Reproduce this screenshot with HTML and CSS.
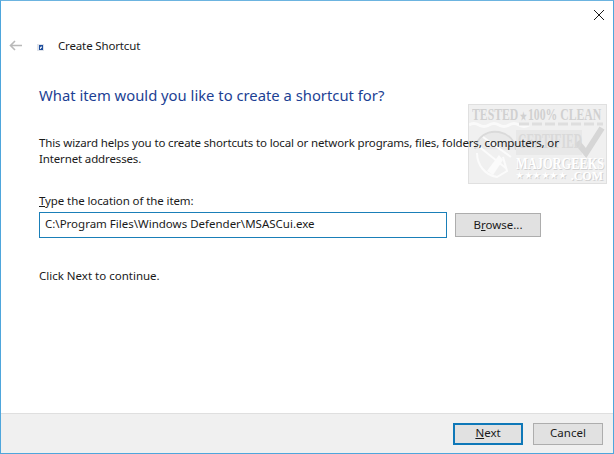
FILE: index.html
```html
<!DOCTYPE html>
<html lang="en">
<head>
<meta charset="utf-8">
<title>Create Shortcut</title>
<link rel="stylesheet" href="styles.css">
</head>
<body>
<div class="window">
  <div class="stamp">
    <svg class="stamp-art" width="137" height="78" viewBox="0 0 137 78">
      <path d="M0 20q5-3 10 0t10 0 10 0 10 0 10 0 10 0" stroke="#fafafa" stroke-width="3" fill="none"/>
      <path d="M50 19h84" stroke="#dedede" stroke-width="3" stroke-dasharray="10 3" fill="none"/>
      <path d="M6 44c2-12 12-19 24-17 10 2 16 9 17 18" stroke="#dadada" stroke-width="2" fill="#e9e9e9"/>
      <path d="M8 40l30 24M14 32l28 20M8 48c0 12 8 22 20 24l10-6-4-14" stroke="#fbfbfb" stroke-width="2" fill="none"/>
      <path d="M18 66l12-16 4 5-10 15z" fill="#fbfbfb"/>
      <rect x="47" y="25" width="66" height="25" fill="#e8e8e8"/>
      <path d="M108 37l9 11 16-25" stroke="#d6d6d6" stroke-width="6" fill="none"/>
    </svg>
    <div class="stamp-top">TESTED<span class="top-star">★</span>100% CLEAN</div>
    <div class="stamp-mid">CERTIFIED</div>
    <div class="stamp-name">MAJORGEEKS</div>
    <div class="stamp-bot"><span class="stars">★★★★★★</span><span>.COM</span></div>
  </div>
  <div class="closebar">
    <svg class="close-icon" width="10" height="10" viewBox="0 0 10 10"><path d="M0 0l10 10M10 0L0 10" stroke="#1a1a1a" stroke-width="1" fill="none"/></svg>
  </div>
  <div class="titlebar">
    <svg class="back-icon" width="13" height="11" viewBox="0 0 13 11"><path d="M13 5.500H1.500M6 1L1.500 5.500 6 10" stroke="#b9b9b9" stroke-width="1.600" fill="none"/></svg>
    <svg class="app-icon" width="7" height="7" viewBox="0 0 7 7"><rect width="7" height="7" fill="#dfe3ea"/><rect x="2" y="1" width="4" height="5" fill="#1f4f9e"/><path d="M3 5V3.500l1-1V2l1.200 1.200L4 4.200V3.800L3.800 5z" fill="#fff"/></svg>
    <span class="title">Create Shortcut</span>
  </div>
  <main class="content">
    <h1 class="heading">What item would you like to create a shortcut for?</h1>
    <p class="intro">This wizard helps you to create shortcuts to local or network programs, files, folders, computers, or<br>Internet addresses.</p>
    <label class="field-label" for="loc"><u>T</u>ype the location of the item:</label>
    <div class="field-row">
      <input class="location" id="loc" value="C:\Program Files\Windows Defender\MSASCui.exe">
      <button class="btn browse">B<u>r</u>owse...</button>
    </div>
    <p class="hint">Click Next to continue.</p>
  </main>
  <footer class="footer">
    <button class="btn next"><u>N</u>ext</button>
    <button class="btn cancel">Cancel</button>
  </footer>
</div>
</body>
</html>
```
FILE: styles.css
```css
* { box-sizing: border-box; }
html, body { margin: 0; padding: 0; }
body { width: 614px; height: 454px; overflow: hidden; background: #fff; font-family: "Noto Sans", "Open Sans", sans-serif; font-size: 11.5px; color: #1a1a1a; }
.window { position: relative; width: 614px; height: 454px; border: 1px solid #4ea6dc; border-top-color: #6cb4e0; display: flex; flex-direction: column; }
.closebar { height: 19px; display: flex; justify-content: flex-end; padding: 9px 9px 0 0; flex: none; position: relative; }
.close-icon { display: block; }
.titlebar { height: 50px; flex: none; display: flex; align-items: center; padding-left: 8px; position: relative; }
.back-icon { margin-right: 15px; }
.app-icon { margin: 5px 14px 0 0; }
.title { font-size: 11.500px; letter-spacing: -.15px; }
.content { flex: 1; padding: 0 0 0 38px; position: relative; }
.heading { margin: 14px 0 0; font-size: 14.800px; font-weight: 400; color: #1c3f94; line-height: 22px; }
.intro { margin: 29px 0 0; line-height: 16px; letter-spacing: -.14px; }
.field-label { display: block; margin-top: 26px; line-height: 15px; letter-spacing: -.1px; }
.field-row { display: flex; margin-top: 4px; gap: 8px; align-items: center; }
.location { width: 408px; height: 26px; border: 1px solid #1a7fb8; padding: 0 0 3px 5px; font: inherit; color: #1a1a1a; outline: none; }
.btn { font: inherit; color: #1a1a1a; background: #e1e1e1; border: 1px solid #adadad; padding: 0 0 2px; border-radius: 0; }
.browse { width: 86px; height: 24px; }
.hint { margin: 30px 0 0; line-height: 15px; }
.footer { height: 40px; flex: none; background: #f0f0f0; border-top: 1px solid #dfdfdf; display: flex; justify-content: flex-end; align-items: center; gap: 10px; padding: 0 10px 0 0; position: relative; }
.next { width: 70px; height: 22px; border: 2px solid #0f78b8; }
.cancel { width: 70px; height: 22px; }
.stamp { position: absolute; left: 467px; top: 103px; width: 139px; height: 80px; background: #f0f0f0; border: 1px solid #e0e0e0; font-family: "Liberation Serif", serif; font-weight: 700; overflow: hidden; white-space: nowrap; }
.stamp-art { position: absolute; left: 0; top: 0; }
.stamp-top { position: relative; margin: 1px 0 0 3px; font-size: 17px; line-height: 18px; color: #d0d0d0; transform: scaleX(.69); transform-origin: 0 50%; }
.top-star { font-size: 11px; margin: 0 2px; }
.stamp-mid { position: relative; margin: 6px 0 0 49px; font-size: 20px; line-height: 20px; color: #d9d9d9; transform: scaleX(.58); transform-origin: 0 50%; }
.stamp-name { position: relative; margin: 6px 0 0 47px; font-size: 17px; line-height: 14px; color: #fff; text-shadow: 1px 1px 0 #d0d0d0; transform: scaleX(.73); transform-origin: 0 50%; }
.stamp-bot { position: relative; display: flex; justify-content: space-between; align-items: center; margin: 0 3px 0 47px; font-size: 12px; line-height: 10px; color: #fff; text-shadow: 1px 1px 0 #d0d0d0; }
.stars { font-size: 7.500px; letter-spacing: 1.500px; }
```
